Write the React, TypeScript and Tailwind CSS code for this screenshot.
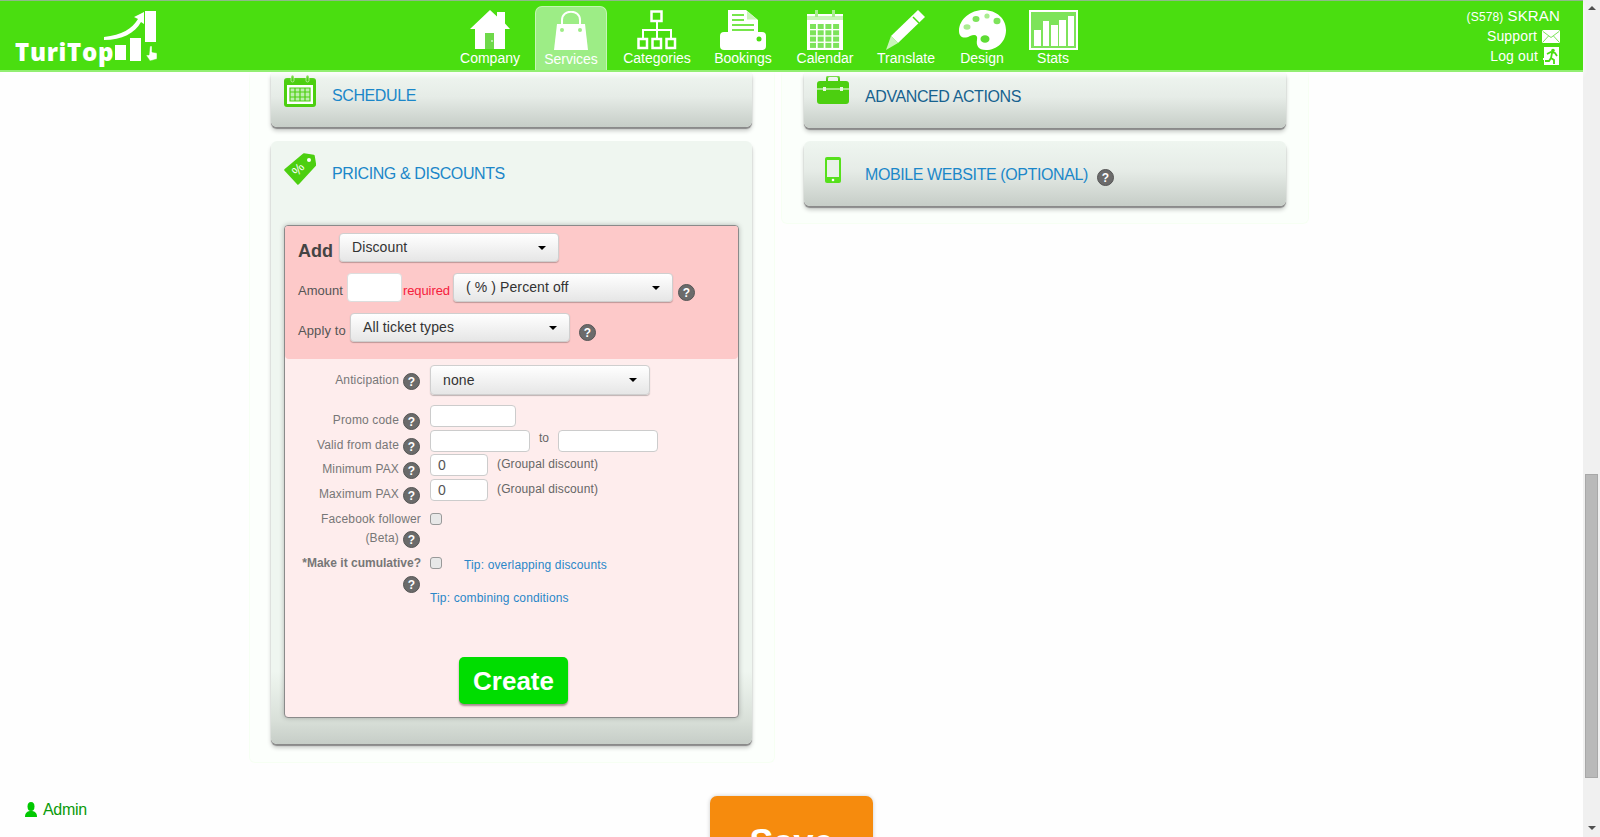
import type { ReactNode } from "react";

const G = "#4ade10";

function Help({ className = "" }: { className?: string }) {
  return (
    <span className={`inline-flex h-[17px] w-[17px] shrink-0 items-center justify-center rounded-full border border-[#555] bg-[#6b6b6b] text-[12px] leading-none font-bold text-white ${className}`}>
      ?
    </span>
  );
}

function Select({ label, w = "w-[220px]", h = "h-[29px]", pad = "pl-[12px]" }: { label: string; w?: string; h?: string; pad?: string }) {
  return (
    <div className={`flex shrink-0 items-center justify-between rounded-[4px] border border-[#cfcfcf] bg-[linear-gradient(#ffffff,#e6e6e6)] pr-[12px] text-[14px] tracking-[0.1px] text-[#333] shadow-[0_1px_1px_rgba(0,0,0,0.25)] ${w} ${h} ${pad}`}>
      <span>{label}</span>
      <span className="h-0 w-0 border-x-[4px] border-t-[4px] border-x-transparent border-t-black" />
    </div>
  );
}

function Field({ w, value }: { w: string; value?: string }) {
  return (
    <div className={`flex h-[22px] shrink-0 items-center rounded-[4px] border border-[#ccc] bg-white pl-[7px] text-[14px] text-[#555] ${w}`}>
      {value}
    </div>
  );
}

function Row({ label, h = "h-[22px]", mt, children }: { label: string; h?: string; mt: string; children: ReactNode }) {
  return (
    <div className={`flex ${h} ${mt}`}>
      <div className="flex w-[135px] shrink-0 items-start justify-end gap-[4px] pt-2 text-[12px] leading-[15px] tracking-[0.15px] text-[#777]">
        <span>{label}</span>
        <Help />
      </div>
      <div className="ml-[10px] flex gap-[9px]">{children}</div>
    </div>
  );
}

function HomeIcon() {
  return (
    <svg width="40" height="40" viewBox="0 0 40 40">
      <path d="M20 0 L27 6.500 V2 H35 V13.500 L40 19 H35 V39 H5 V19 H0 Z" fill="#fff" />
      <rect x="15" y="23" width="9" height="16" fill="#6fd94a" />
      <rect x="21.500" y="30" width="1" height="2" fill="#fff" />
    </svg>
  );
}

function BagIcon() {
  return (
    <svg width="38" height="40" viewBox="0 0 38 40">
      <path d="M5 13 H33 L36 39 H2 Z" fill="#fff" />
      <path d="M10 16 V9 C10 -2 28 -2 28 9 V16" fill="none" stroke="#fff" strokeWidth="2" />
      <circle cx="10" cy="19" r="2" fill="#9ded86" />
      <circle cx="28" cy="19" r="2" fill="#9ded86" />
    </svg>
  );
}

function TreeIcon() {
  return (
    <svg width="40" height="40" viewBox="0 0 40 40" fill="none" stroke="#fff" strokeWidth="2.500">
      <rect x="14.500" y="1.500" width="10" height="9.500" />
      <path d="M20 11 V20 M6 28 V20 H34 V28 M20 20 V28" strokeWidth="2" />
      <rect x="1.500" y="29" width="8.500" height="9" />
      <rect x="15.500" y="29" width="8.500" height="9" />
      <rect x="29.500" y="29" width="8.500" height="9" />
    </svg>
  );
}

function PrinterIcon() {
  return (
    <svg width="46" height="40" viewBox="0 0 46 40">
      <path d="M8 0 H26 L38 10 V26 H8 Z" fill="#fff" />
      <path d="M27 1 L37 9.500 H27 Z" fill="#c9f5b8" />
      <path d="M12 5 H24 M12 10 H24 M12 15 H34 M12 20 H34" stroke={G} strokeWidth="1.600" />
      <rect x="0" y="22" width="46" height="18" rx="4" fill="#fff" />
      <circle cx="39" cy="29" r="2.500" fill={G} />
    </svg>
  );
}

function CalendarIcon() {
  const cells = [0, 1, 2, 3];
  return (
    <svg width="36" height="40" viewBox="0 0 36 40">
      <rect x="0" y="4" width="36" height="36" fill="#fff" />
      <rect x="0" y="6" width="36" height="4" fill="#c9f5b8" />
      <rect x="8" y="0" width="3" height="7" fill="#a9ec90" />
      <rect x="25" y="0" width="3" height="7" fill="#a9ec90" />
      {cells.map((r) =>
        cells.map((c) => (
          <rect key={`${r}-${c}`} x={3 + c * 7.700} y={14 + r * 6.300} width="6" height="5" fill="#7de35a" />
        )),
      )}
    </svg>
  );
}

function PencilIcon() {
  return (
    <svg width="40" height="40" viewBox="0 0 40 40">
      <path d="M32 0 L39 7 L12 33 L5 26 Z" fill="#fff" />
      <path d="M27 7 L33 13" stroke={G} strokeWidth="1.500" />
      <path d="M5 26 L12 33 L0 40 Z" fill="#c9f5b8" />
    </svg>
  );
}

function PaletteIcon() {
  return (
    <svg width="47" height="40" viewBox="0 0 47 40">
      <path d="M24 0 C38 0 47 9 47 20 C47 32 38 40 27 40 C19 40 17 35 18 30 C19 25 16 24 11 26 C6 29 0 28 0 21 C0 9 12 0 24 0 Z" fill="#fff" />
      <ellipse cx="17" cy="9" rx="3.500" ry="3" fill="#7de35a" />
      <circle cx="28" cy="6" r="2.600" fill="#a9ec90" />
      <ellipse cx="38" cy="11" rx="3.500" ry="3.200" fill="#7de35a" />
      <ellipse cx="8" cy="17" rx="3.500" ry="2.800" fill="#a9ec90" />
      <ellipse cx="26" cy="29" rx="4.500" ry="3.800" fill="#5ddc33" />
    </svg>
  );
}

function StatsIcon() {
  return (
    <svg width="49" height="40" viewBox="0 0 49 40">
      <rect x="1" y="1" width="47" height="38" fill="#7de35a" stroke="#fff" strokeWidth="2" />
      <rect x="5" y="20" width="7" height="16" fill="#fff" />
      <rect x="14" y="11" width="6" height="25" fill="#fff" />
      <rect x="22" y="15" width="7" height="21" fill="#fff" />
      <rect x="30" y="10" width="7" height="26" fill="#fff" />
      <rect x="39" y="6" width="6" height="30" fill="#fff" />
    </svg>
  );
}

function NavItem({ label, w, ml = "", active = false, icon }: { label: string; w: string; ml?: string; active?: boolean; icon: ReactNode }) {
  return (
    <div className={`flex h-full shrink-0 flex-col items-center ${w} ${ml} ${active ? "rounded-t-[7px] border border-b-0 border-[#c4f5b3] bg-[#9ded86]" : ""}`}>
      <div className="mt-[4px] flex h-[39px] items-start">{icon}</div>
      <span className="mt-[1px] text-[14px] leading-[16px] text-white">{label}</span>
    </div>
  );
}

function Logo() {
  return (
    <div className="relative h-full w-[453px] shrink-0">
      <span className="absolute top-[36px] left-[15px] text-[24px] leading-[30px] font-extrabold tracking-[0.7px] text-white [font-family:'Open_Sans',sans-serif]">
        TuriTop
      </span>
      <svg className="absolute top-[9px] left-[100px]" width="62" height="56" viewBox="0 0 62 56">
        <path d="M4 27 C22 25 32 19 38 9 L34 7 L44 2 L44 14 L41 12 C35 23 22 30 4 30 Z" fill="#fff" />
        <rect x="15" y="35" width="11" height="15" fill="#fff" />
        <rect x="30" y="28" width="11" height="23" fill="#fff" />
        <rect x="45" y="1" width="11" height="31" fill="#fff" />
        <path d="M50 36 L52 36 L52 42 L57 43 L57 49 L50 51 L46 45 L49 45 Z" fill="#fff" stroke={G} strokeWidth="0.500" />
      </svg>
    </div>
  );
}

function Header() {
  return (
    <header className="relative z-10 flex h-[72px] shrink-0 border-t border-b-2 border-t-[#8fb98a] border-b-[#92ef72] bg-[#4ade10] shadow-[0_3px_5px_rgba(255,255,255,0.9)]">
      <Logo />
      <nav className="flex pt-[5px]">
        <NavItem label="Company" w="w-[74px]" icon={<HomeIcon />} />
        <NavItem label="Services" w="w-[72px]" ml="ml-[8px]" active icon={<BagIcon />} />
        <NavItem label="Categories" w="w-[86px]" ml="ml-[7px]" icon={<TreeIcon />} />
        <NavItem label="Bookings" w="w-[86px]" icon={<PrinterIcon />} />
        <NavItem label="Calendar" w="w-[78px]" icon={<CalendarIcon />} />
        <NavItem label="Translate" w="w-[84px]" icon={<PencilIcon />} />
        <NavItem label="Design" w="w-[68px]" icon={<PaletteIcon />} />
        <NavItem label="Stats" w="w-[74px]" icon={<StatsIcon />} />
      </nav>
      <div className="ml-auto flex flex-col items-end pt-[5px] pr-[23px] text-[14px] leading-[20px] tracking-[0.15px] text-white">
        <div className="h-[20px]">
          <span className="text-[12px]">(S578)</span> <span className="text-[15px]">SKRAN</span>
        </div>
        <div className="flex items-center gap-[5px]">
          Support
          <svg width="18" height="13" viewBox="0 0 18 13">
            <rect width="18" height="13" rx="1.500" fill="#fff" />
            <path d="M1 1.500 L9 7.500 L17 1.500 M1 12 L6.500 6 M17 12 L11.500 6" fill="none" stroke="#7de35a" strokeWidth="1" />
          </svg>
        </div>
        <div className="flex items-center gap-[5px]">
          Log out
          <svg width="17" height="18" viewBox="0 0 17 18">
            <path d="M1 0 H16 V18 H1 V13 H0 V11 H1 Z" fill="#fff" />
            <circle cx="10" cy="3.500" r="1.800" fill={G} />
            <path d="M4 7 L8 5 L12 6 L14 9 M9 6 L8 11 L11 13 L11 17 M8 11 L6 14 L2 14" fill="none" stroke={G} strokeWidth="1.800" />
          </svg>
        </div>
      </div>
    </header>
  );
}

const cardBg = "bg-[linear-gradient(#eff6f0,#e6ece7_45%,#c6cdc7)]";
const cardShadow = "shadow-[0_2px_1px_#8a8a8a,0_4px_4px_rgba(0,0,0,0.2)]";
const titleText = "text-[16px] leading-[20px] tracking-[-0.4px]";

function ScheduleCard() {
  return (
    <div className={`flex h-[55px] rounded-b-[6px] pl-[13px] ${cardBg} ${cardShadow}`}>
      <svg className="mt-[3px]" width="32" height="32" viewBox="0 0 32 32">
        <rect x="0" y="3" width="32" height="29" rx="3" fill="#4ccf10" />
        <rect x="7" y="0" width="3" height="7" rx="1.500" fill="#4ccf10" stroke="#fff" strokeWidth="0.500" />
        <rect x="22" y="0" width="3" height="7" rx="1.500" fill="#4ccf10" stroke="#fff" strokeWidth="0.500" />
        <rect x="3" y="10" width="26" height="19" fill="#fff" />
        <path d="M6 13 H26 V26 H6 Z M6 17 H26 M6 22 H26 M11 13 V26 M16 13 V26 M21 13 V26" fill="#bfeeb0" stroke="#4ccf10" strokeWidth="1.200" />
      </svg>
      <span className={`mt-[14px] ml-[16px] text-[#1b87c9] ${titleText}`}>SCHEDULE</span>
    </div>
  );
}

function PricingCard() {
  return (
    <div className={`mt-[14px] rounded-[6px] bg-[linear-gradient(#eff6f0,#eff6f0_88%,#d9e0d9_96%,#c6cdc7)] px-[13px] pb-[26px] ${cardShadow}`}>
      <div className="flex h-[84px] items-start">
        <svg className="mt-[12px]" width="32" height="32" viewBox="0 0 32 32">
          <path d="M20 1.500 L29.500 3 L31 12 L14 30.500 L1.500 17 Z" fill="#4ccf10" stroke="#4ccf10" strokeWidth="2.500" strokeLinejoin="round" />
          <circle cx="25" cy="7" r="2" fill="#fff" />
          <text x="9" y="21" fontSize="13" fill="#fff" transform="rotate(-50 14 17)">%</text>
        </svg>
        <span className={`mt-[23px] ml-[16px] text-[#1b87c9] ${titleText}`}>PRICING &amp; DISCOUNTS</span>
      </div>
      <div className="h-[493px] overflow-hidden rounded-[4px] border border-[#8a8a8a] bg-[#feeded] shadow-[0_0_5px_rgba(0,0,0,0.25)]">
        <div className="h-[133px] rounded-b-[4px] bg-[#fdc9c9] pt-[7px] pl-[13px]">
          <div className="flex h-[29px]">
            <span className="mt-[6px] mr-[6px] text-[18px] leading-[24px] font-bold text-[#444]">Add</span>
            <Select label="Discount" />
          </div>
          <div className="mt-[11px] flex h-[29px] text-[13px] text-[#555]">
            <span className="mt-[10px] w-[49px] leading-[16px]">Amount</span>
            <div className="h-[29px] w-[55px] rounded-[4px] border border-[#ddd] bg-white" />
            <span className="mt-[10px] w-[51px] pl-[1px] leading-[16px] tracking-[-0.1px] text-[#f5203c]">required</span>
            <Select label="( % ) Percent off" />
            <Help className="mt-[11px] ml-[5px]" />
          </div>
          <div className="mt-[11px] flex h-[29px] text-[13px] text-[#555]">
            <span className="mt-[10px] w-[52px] leading-[16px] tracking-[0.1px]">Apply to</span>
            <Select label="All ticket types" />
            <Help className="mt-[11px] ml-[9px]" />
          </div>
        </div>
        <Row label="Anticipation" h="h-[30px]" mt="mt-[6px]">
          <Select label="none" h="h-[30px]" />
        </Row>
        <Row label="Promo code" mt="mt-[10px]">
          <Field w="w-[86px]" />
        </Row>
        <Row label="Valid from date" mt="mt-[3px]">
          <Field w="w-[100px]" />
          <span className="text-[12px] leading-[16px] text-[#666]">to</span>
          <Field w="w-[100px]" />
        </Row>
        <Row label="Minimum PAX" mt="mt-[2px]">
          <Field w="w-[58px]" value="0" />
          <span className="mt-[1px] text-[12px] leading-[18px] tracking-[0.13px] text-[#666]">(Groupal discount)</span>
        </Row>
        <Row label="Maximum PAX" mt="mt-[3px]">
          <Field w="w-[58px]" value="0" />
          <span className="mt-[1px] text-[12px] leading-[18px] tracking-[0.13px] text-[#666]">(Groupal discount)</span>
        </Row>
        <div className="mt-[11px] flex h-[42px]">
          <div className="flex w-[136px] flex-col items-end text-[12px] leading-[15px] tracking-[0.15px] text-[#777]">
            <span>Facebook follower</span>
            <div className="mt-[4px] mr-[1px] flex items-start gap-[4px]">
              <span>(Beta)</span>
              <Help />
            </div>
          </div>
          <div className="mt-[1px] ml-[9px] h-[12px] w-[12px] rounded-[3px] border border-[#999] bg-[#e8e8e8]" />
        </div>
        <div className="mt-[2px] flex h-[42px]">
          <div className="flex w-[136px] flex-col items-end text-[12px] leading-[15px] tracking-[0.15px] text-[#777]">
            <span className="font-bold tracking-normal">*Make it cumulative?</span>
            <Help className="mt-[5px] mr-[1px]" />
          </div>
          <div className="mt-[1px] ml-[9px] h-[12px] w-[12px] rounded-[3px] border border-[#999] bg-[#e8e8e8]" />
          <span className="mt-[2px] ml-[22px] text-[12px] leading-[15px] tracking-[0.15px] text-[#2a87c8]">Tip: overlapping discounts</span>
        </div>
        <div className="-mt-[7px] ml-[145px] text-[12px] leading-[15px] tracking-[0.15px] text-[#2a87c8]">Tip: combining conditions</div>
        <div className="mt-[51px] flex justify-center pl-[4px]">
          <button className="flex h-[47px] w-[109px] items-center justify-center rounded-[5px] bg-[#00dd00] pt-[1px] text-[26px] font-bold text-white shadow-[0_2px_2px_rgba(90,60,60,0.55)]">
            Create
          </button>
        </div>
      </div>
    </div>
  );
}

function AdvancedCard() {
  return (
    <div className={`flex h-[56px] rounded-b-[6px] pl-[13px] ${cardBg} ${cardShadow}`}>
      <svg className="mt-[4px]" width="32" height="28" viewBox="0 0 32 28">
        <path d="M10 5 V2.500 C10 1 11 0 12.500 0 H19.500 C21 0 22 1 22 2.500 V5" fill="none" stroke="#4ccf10" strokeWidth="2" />
        <rect x="0" y="5" width="32" height="23" rx="3" fill="#4ccf10" />
        <path d="M0 13 H32" stroke="#fff" strokeWidth="1" />
        <rect x="6" y="11" width="3" height="4" fill="#e8f5e3" />
        <rect x="23" y="11" width="3" height="4" fill="#e8f5e3" />
      </svg>
      <span className={`mt-[15px] ml-[16px] text-[#17628f] ${titleText}`}>ADVANCED ACTIONS</span>
    </div>
  );
}

function MobileCard() {
  return (
    <div className={`mt-[13px] flex h-[65px] rounded-[6px] pl-[21px] ${cardBg} ${cardShadow}`}>
      <svg className="mt-[16px]" width="16" height="26" viewBox="0 0 16 26">
        <rect width="16" height="26" rx="2" fill="#56e01c" />
        <rect x="2" y="3" width="12" height="17" fill="#e8f2e8" />
        <circle cx="8" cy="23" r="1.300" fill="#fff" />
      </svg>
      <span className={`mt-[24px] ml-[24px] text-[#1b87c9] ${titleText}`}>MOBILE WEBSITE (OPTIONAL)</span>
      <Help className="mt-[28px] ml-[9px]" />
    </div>
  );
}

function Scrollbar() {
  return (
    <div className="flex w-[17px] shrink-0 flex-col items-center bg-[#f0f0f0]">
      <span className="mt-[6px] h-0 w-0 border-x-[4px] border-b-[4px] border-x-transparent border-b-[#505050]" />
      <div className="mt-[464px] h-[304px] w-[13px] border border-[#a8a8a8] bg-[#b9b9b9]" />
      <span className="mt-[48px] h-0 w-0 border-x-[4px] border-t-[4px] border-x-transparent border-t-[#505050]" />
    </div>
  );
}

export default function App() {
  return (
    <div className="flex h-[837px] w-[1600px] overflow-hidden bg-[#fefefe] [font-family:'Liberation_Sans',Arial,sans-serif]">
      <div className="flex min-w-0 flex-1 flex-col">
        <Header />
        <main className="flex pl-[249px]">
          <div className="h-[691px] w-[526px] rounded-b-[6px] border-x border-b border-[#f6fff3] bg-[#fcfffc] pr-[22px] pl-[21px]">
            <ScheduleCard />
            <PricingCard />
          </div>
          <div className="ml-[6px] h-[152px] w-[528px] rounded-b-[6px] border-x border-b border-[#f6fff3] bg-[#fbfffb] pr-[22px] pl-[22px]">
            <AdvancedCard />
            <MobileCard />
          </div>
        </main>
        <div className="mt-[33px] grid grid-cols-[1fr_163px_1fr]">
          <div className="flex items-start gap-[6px] pt-[5px] pl-[25px] text-[16px] leading-[18px] tracking-[-0.3px] text-[#0a9a0a]">
            <svg className="mt-[1px]" width="12" height="15" viewBox="0 0 12 15">
              <ellipse cx="6" cy="4.500" rx="3.500" ry="4.500" fill="#00c800" />
              <path d="M0 15 C0 10 3 9 6 9 C9 9 12 10 12 15 Z" fill="#00c800" />
            </svg>
            Admin
          </div>
          <div className="h-[80px] rounded-t-[7px] bg-[#f68b0d] pt-[27px] text-center text-[36px] leading-[40px] font-bold text-white shadow-[0_0_4px_rgba(0,0,0,0.2)]">
            Save
          </div>
        </div>
      </div>
      <Scrollbar />
    </div>
  );
}
